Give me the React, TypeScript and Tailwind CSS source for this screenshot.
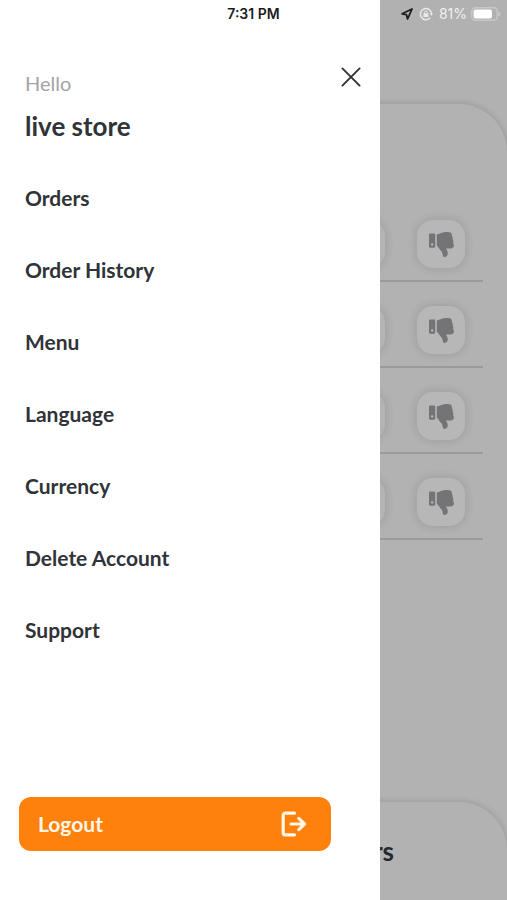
import React from 'react';
import { FaThumbsDown } from 'react-icons/fa';

const menuItems = ['Orders', 'Order History', 'Menu', 'Language', 'Currency', 'Delete Account', 'Support'];

const pendingOrders = [1, 2, 3, 4];

const LocationIcon = () => (
  <svg width="12" height="12" viewBox="0 0 12 12" fill="none" stroke="#1c1c1e" strokeWidth="1.8" strokeLinejoin="round">
    <path d="M11 1 1.2 5.8 5.4 6.6 6.6 11Z" />
  </svg>
);

const RotationLockIcon = () => (
  <svg width="14" height="14" viewBox="0 0 14 14" fill="none" stroke="#e8e8e8" strokeWidth="1.5">
    <path d="M11.2 10.8A5.6 5.6 0 1 1 12.6 7" />
    <path d="M10.8 6.4H14L12.4 9Z" fill="#e8e8e8" stroke="none" />
    <rect x="4.4" y="6.2" width="5" height="3.8" rx="0.6" fill="#e8e8e8" stroke="none" />
    <path d="M5.5 6.6V5.4a1.4 1.4 0 0 1 2.8 0v1.2" strokeWidth="1" />
  </svg>
);

const BatteryIcon = () => (
  <svg width="30" height="14" viewBox="0 0 30 14" fill="none">
    <rect x="0.8" y="0.8" width="25.4" height="12.4" rx="3.6" stroke="#c8c8c8" strokeWidth="1.4" />
    <rect x="2.6" y="2.4" width="18.4" height="9.2" rx="2" fill="#fff" />
    <path d="M27.4 4.4c1.6.6 2 1.6 2 2.6s-.4 2-2 2.6Z" fill="#c8c8c8" />
  </svg>
);

const CloseIcon = () => (
  <svg width="20" height="20" viewBox="0 0 20 20" fill="none" stroke="#303236" strokeWidth="1.9" strokeLinecap="round">
    <path d="m1.4 1.4 17.2 17.2M18.6 1.4 1.4 18.6" />
  </svg>
);

const LogoutIcon = () => (
  <svg width="26" height="26" viewBox="0 0 26 26" fill="none" stroke="#fff6e6" strokeWidth="3.2" strokeLinecap="round" strokeLinejoin="round">
    <path d="M13.5 2.2H4.2a2 2 0 0 0-2 2v17.6a2 2 0 0 0 2 2h9.3" />
    <path d="M10 13h13.5M17.8 7.4l5.7 5.6-5.7 5.6" />
  </svg>
);

const StatusBar = () => (
  <div className="absolute inset-x-0 top-0 z-20 grid h-7 grid-cols-3 items-center font-['Inter',sans-serif]">
    <span className="col-start-2 text-center text-[14px] leading-5 font-semibold text-[#1c1c1e]">7:31 PM</span>
    <div className="flex items-center justify-end gap-1.5 pr-1.5">
      <LocationIcon />
      <RotationLockIcon />
      <div className="flex items-center gap-1">
        <span className="text-[14px] leading-5 text-[#f0f0f0]">81%</span>
        <BatteryIcon />
      </div>
    </div>
  </div>
);

const OrderRow = () => (
  <li className="flex h-[86px] items-center justify-end gap-8 border-b-2 border-[#9a9a9a] pt-3 pr-[18px]">
    <div className="size-12 rounded-2xl bg-[#b4b4b4] shadow-[0_0_7px_3px_rgba(0,0,0,0.08)]" />
    <button
      type="button"
      aria-label="Reject order"
      className="flex size-12 items-center justify-center rounded-2xl bg-[#b7b7b7] text-[#747476] shadow-[0_0_7px_3px_rgba(0,0,0,0.08)]"
    >
      <FaThumbsDown size={25} />
    </button>
  </li>
);

const Drawer = () => (
  <aside className="absolute inset-y-0 left-0 z-10 flex w-3/4 flex-col bg-white text-[#303338]">
    <header className="flex items-start justify-between pt-[67px] pr-[19px] pl-[25px]">
      <div>
        <p className="text-[20px] leading-8 text-[#a3a3a6]">Hello</p>
        <h1 className="text-[26px] leading-[54px] font-bold">live store</h1>
      </div>
      <button type="button" aria-label="Close menu">
        <CloseIcon />
      </button>
    </header>
    <nav className="mt-[9px]">
      <ul>
        {menuItems.map((item) => (
          <li key={item}>
            <a href="#" className="flex h-[72px] items-center pl-[25px] text-[21px] leading-7 font-bold">
              {item}
            </a>
          </li>
        ))}
      </ul>
    </nav>
    <button
      type="button"
      className="mt-auto mr-[49px] mb-[49px] ml-[19px] flex h-[54px] items-center justify-between rounded-xl bg-[#ff810d] pr-6 pl-[19px] text-[21px] leading-7 font-bold text-[#fff6e6]"
    >
      Logout
      <LogoutIcon />
    </button>
  </aside>
);

const App = () => {
  return (
    <div className="relative flex min-h-screen flex-col overflow-hidden bg-[#b1b1b1] font-['Lato',sans-serif]">
      <StatusBar />
      <main className="mt-[104px] flex flex-1 flex-col rounded-tr-[48px] bg-[#b2b2b2] pt-[92px] shadow-[0_0_5px_2px_rgba(0,0,0,0.1)]">
        <ul className="mr-6">
          {pendingOrders.map((id) => (
            <OrderRow key={id} />
          ))}
        </ul>
        <footer className="mt-auto flex h-[98px] items-center justify-end rounded-tr-[48px] pr-[113px] shadow-[0_0_5px_2px_rgba(0,0,0,0.1)]">
          <h2 className="text-[26px] leading-8 font-bold text-[#25282e]">Orders</h2>
        </footer>
      </main>
      <Drawer />
    </div>
  );
};

export default App;
